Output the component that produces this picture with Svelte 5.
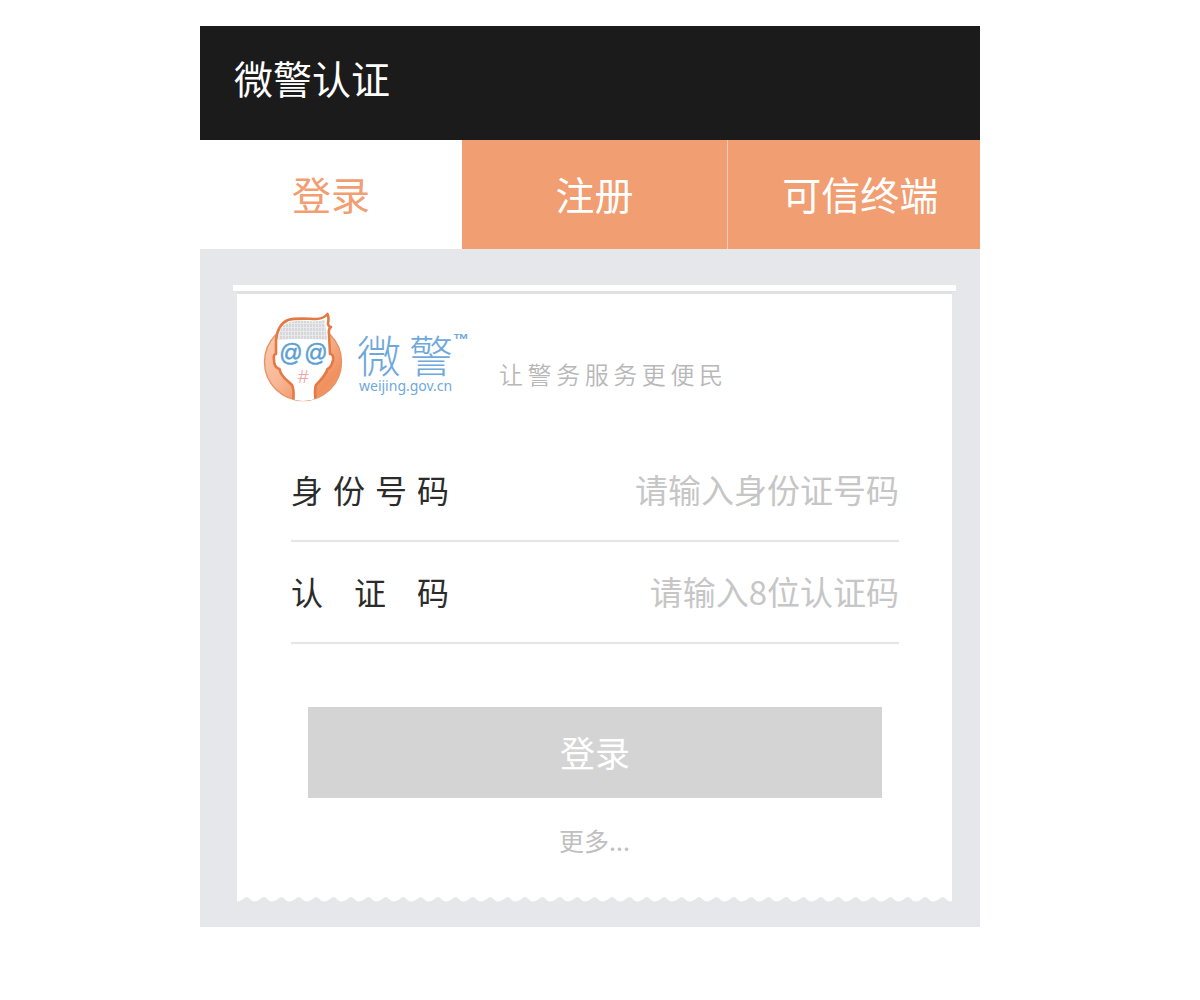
<script>
    const tabs = ["登录", "注册", "可信终端"];
    let activeTab = $state(0);

    let idNumber = $state("");
    let authCode = $state("");

    function submitLogin(event) {
        event.preventDefault();
    }
</script>

<main class="page">
    <div class="app">
        <header class="title-bar">
            <h1>微警认证</h1>
        </header>

        <nav class="tabs">
            {#each tabs as tab, i}
                <button
                    type="button"
                    class="tab"
                    class:active={activeTab === i}
                    onclick={() => (activeTab = i)}>{tab}</button
                >
            {/each}
        </nav>

        <section class="content">
            <div class="slot"></div>
            <div class="paper">
                <div class="brand">
                    <svg class="logo" viewBox="10 10 86 94" aria-hidden="true">
                        <defs>
                            <linearGradient id="disc" x1="0" y1="0" x2="1" y2="1">
                                <stop offset="0" stop-color="#f9cdb2" />
                                <stop offset="0.45" stop-color="#f8b896" />
                                <stop offset="0.8" stop-color="#f0905f" />
                                <stop offset="1" stop-color="#f6ab84" />
                            </linearGradient>
                            <pattern id="hair" width="3" height="4" patternUnits="userSpaceOnUse">
                                <rect width="3" height="4" fill="#e9e9eb" />
                                <path d="M1 0v3" stroke="#c4c5c9" stroke-width="1" />
                            </pattern>
                            <clipPath id="disc-clip">
                                <path d="M10 10H96V62H92A39 39 0 0 1 14 62H10Z" />
                            </clipPath>
                        </defs>
                        <circle cx="53" cy="62" r="38.5" fill="url(#disc)" stroke="#e99267" stroke-width="1.4" />
                        <g clip-path="url(#disc-clip)">
                            <path
                                d="M26 54V40C27 30 31 23 38 20C46 17.500 58 19 66 19C71 19 75 17 77.500 14C79.500 18 78 22 78 24C78.500 26 80 27 81 27C79 28 78.500 30 79 34L80 54C82.500 54 83.500 56 83 60C82 65 80 68 77.500 69C75 77 70 80 66 85C64 89 65 94 66 104H43C44 95 44 89 42 85C37 80 31 77 29.500 69C26 68 24 65 24 60C23.500 56 24 54 26 54Z"
                                fill="#fff"
                                stroke="#e37a45"
                                stroke-width="2.6"
                                stroke-linejoin="round"
                            />
                        </g>
                        <path
                            d="M28 40C29 31 32 25 38 22.500C44 20.500 50 20.500 57 21C64 22 71 21 75 20C75 25 76 29 77 40Q53 38 28 40Z"
                            fill="url(#hair)"
                        />
                        <g font-family="Liberation Sans, sans-serif" text-anchor="middle">
                            <g font-size="23" fill="#5b9fd2" stroke="#5b9fd2" stroke-width="0.5">
                                <text x="41" y="61">@</text>
                                <text x="66" y="61">@</text>
                            </g>
                            <text x="53" y="83" font-size="19" font-style="italic" fill="#f2a9a5">#</text>
                        </g>
                    </svg>
                    <div class="wordmark">
                        <div class="wordmark-name">
                            <span>微</span><span>警</span><sup>™</sup>
                        </div>
                        <div class="wordmark-domain">weijing.gov.cn</div>
                    </div>
                    <p class="slogan">让警务服务更便民</p>
                </div>

                <form onsubmit={submitLogin}>
                    <div class="field">
                        <label for="id-number">身份号码</label>
                        <input
                            id="id-number"
                            type="text"
                            placeholder="请输入身份证号码"
                            bind:value={idNumber}
                        />
                    </div>
                    <div class="field">
                        <label for="auth-code">认证码</label>
                        <input
                            id="auth-code"
                            type="text"
                            placeholder="请输入8位认证码"
                            bind:value={authCode}
                        />
                    </div>
                    <button type="submit" class="login">登录</button>
                </form>
                <a class="more" href="#more">更多...</a>
            </div>
            <!-- torn receipt edge -->
            <svg class="edge" aria-hidden="true">
                <defs>
                    <pattern id="scallop" width="17.4" height="6" patternUnits="userSpaceOnUse">
                        <path d="M0 0H17.400V5.500C13.500 5.500 12.500 1 9.700 1C7 1 5 5.500 0 5.500Z" fill="#fff" />
                    </pattern>
                </defs>
                <rect width="100%" height="6" fill="url(#scallop)" />
            </svg>
        </section>
    </div>
</main>

<style>
    :global(body) {
        margin: 0;
        background: #fff;
    }

    .page {
        padding: 26px 220px 26px 200px;
        font-family: "Noto Sans CJK SC", sans-serif;
    }

    .app {
        overflow: hidden;
    }

    button,
    input {
        font-family: inherit;
        border: 0;
        border-radius: 0;
        padding: 0;
        margin: 0;
    }

    .title-bar {
        box-sizing: border-box;
        height: 114px;
        padding: 21px 34px;
        background: #1b1b1b;
        & h1 {
            margin: 0;
            font-size: 39px;
            line-height: 60px;
            font-weight: 400;
            color: #fff;
        }
    }

    /* the last tab runs past the right edge and is cut off */
    .tabs {
        display: flex;
        overflow: hidden;
        background: #f19e72;
    }

    .tab {
        box-sizing: border-box;
        flex: 0 0 34%;
        height: 109px;
        padding-bottom: 4px;
        font-size: 39px;
        line-height: 60px;
        color: #fff;
        background: #f19e72;
        cursor: pointer;
        &:first-child {
            flex-basis: 262px;
        }
        &:last-child {
            border-left: 1px solid #f3cdb5;
        }
        &.active {
            color: #f19e72;
            background: #fff;
        }
    }

    .content {
        padding: 36px 24px 25px 33px;
        background: #e6e7eb;
    }

    .slot {
        height: 6px;
        background: #fff;
        border-bottom: 1px solid #e2e2e4;
    }

    .paper {
        margin: 0 4px;
        padding: 16px 23px 38px;
        background: #fff;
        border-top: 2px solid #e0e1e3;
    }

    .brand {
        display: flex;
    }

    .logo {
        width: 86px;
        height: 94px;
    }

    .wordmark {
        margin-left: 11px;
        padding-top: 20px;
        color: #6fa9dc;
    }

    .wordmark-name {
        display: flex;
        gap: 8px;
        font-size: 44px;
        line-height: 48px;
        font-weight: 300;
        & sup {
            margin-left: -8px;
            font-family: "Liberation Sans", sans-serif;
            font-size: 16px;
            line-height: 20px;
            font-weight: 700;
        }
    }

    .wordmark-domain {
        padding-left: 2px;
        font-family: "Noto Sans", sans-serif;
        font-size: 14px;
        line-height: 16px;
        font-weight: 400;
    }

    .slogan {
        width: 224px;
        margin: 46px 0 0 30px;
        font-size: 24px;
        line-height: 36px;
        font-weight: 350;
        color: #b8b8b8;
        text-align-last: justify;
    }

    form {
        display: flex;
        flex-direction: column;
        margin: 36px 30px 0 31px;
    }

    .field {
        display: flex;
        justify-content: space-between;
        align-items: center;
        box-sizing: border-box;
        height: 102px;
        padding-bottom: 2px;
        border-bottom: 2px solid #e5e5e5;
        & label {
            flex: 0 0 158px;
            font-size: 32px;
            line-height: 48px;
            color: #2b2b2b;
            text-align-last: justify;
        }
        & input {
            flex: 1;
            min-width: 0;
            font-size: 33px;
            line-height: 48px;
            height: 48px;
            color: #2b2b2b;
            text-align: right;
            background: none;
            outline: none;
        }
        & input::placeholder {
            color: #c6c6c6;
            opacity: 1;
        }
    }

    .login {
        height: 91px;
        margin: 63px 17px 0;
        padding-bottom: 2px;
        font-size: 35px;
        line-height: 52px;
        color: #fff;
        background: #d4d4d4;
        cursor: pointer;
    }

    .more {
        display: block;
        margin-top: 24px;
        font-size: 25px;
        line-height: 36px;
        text-align: center;
        text-decoration: none;
        color: #c0c0c0;
    }

    .edge {
        display: block;
        width: calc(100% - 8px);
        height: 6px;
        margin: 0 4px;
    }
</style>
